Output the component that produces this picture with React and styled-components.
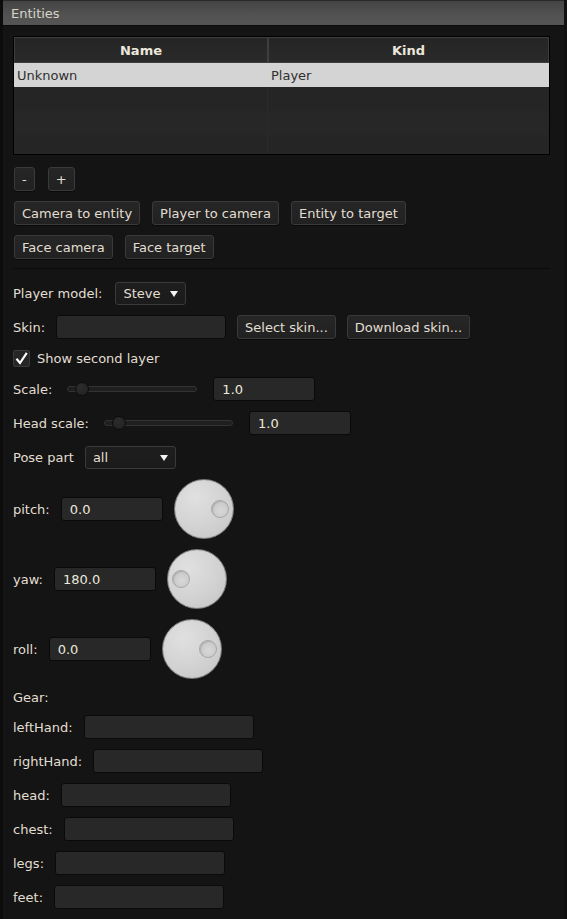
import React from "react";
import styled, { createGlobalStyle } from "styled-components";

const Global = createGlobalStyle`
  html, body { margin: 0; padding: 0; background: #141414; }
  body { font-family: "DejaVu Sans", "Liberation Sans", sans-serif; font-size: 13px; color: #e2ded2; }
  * { box-sizing: border-box; }
`;

const Window = styled.div`
  min-height: 100vh;
  background: #141414;
  border-left: 3px solid #0c0c0c;
  border-right: 3px solid #101010;
`;

const TitleBar = styled.div`
  height: 26px;
  display: flex;
  align-items: center;
  padding-left: 8px;
  background: linear-gradient(#444444, #525252 60%, #555555);
  border-top: 1px solid #2a2a2a;
  border-bottom: 1px solid #0a0a0a;
  color: #d8d4c8;
  font-size: 13px;
`;

const Content = styled.div`
  padding: 10px 14px 0 10px;
  display: flex;
  flex-direction: column;
`;

const Table = styled.div`
  height: 119px;
  border: 1px solid #000;
  background: #262626;
  overflow: hidden;
  display: flex;
  flex-direction: column;
`;

const Row = styled.div`
  display: grid;
  grid-template-columns: 254px 1fr;
  height: ${(p) => (p.$header ? 26 : 24)}px;
  flex: none;
  background: ${(p) => (p.$selected ? "#d4d4d4" : p.$alt ? "#252525" : "#272727")};
  color: ${(p) => (p.$selected ? "#303030" : "#e2ded2")};
`;

const HeaderCell = styled.div`
  display: flex;
  align-items: center;
  justify-content: center;
  font-weight: bold;
  color: #ebe7da;
  background: linear-gradient(#252525, #2a2a2a);
  border: 1px solid #3e3e3e;
`;

const Cell = styled.div`
  display: flex;
  align-items: center;
  padding-left: 3px;
  border-right: ${(p) => (p.$first && !p.$selected ? "1px solid #2b2b2b" : "none")};
  padding-right: ${(p) => (p.$first && p.$selected ? 1 : 0)}px;
`;

const ButtonRow = styled.div`
  display: flex;
  gap: ${(p) => p.$gap || 12}px;
  margin-top: ${(p) => p.$mt || 10}px;
  padding-left: 1px;
`;

const Button = styled.button`
  height: 24px;
  padding: 0 ${(p) => p.$px || 7}px;
  font-family: inherit;
  font-size: 13px;
  color: #e2ded2;
  background: linear-gradient(#262626, #212121);
  border: 1px solid #3a3a3a;
  border-radius: 3px;
  box-shadow: 0 1px 0 #0a0a0a;
  cursor: default;
  min-width: ${(p) => p.$min || 0}px;
`;

const Separator = styled.div`
  height: 1px;
  background: #3a3a3a;
  border-bottom: 1px solid #0a0a0a;
  margin: 9px 0 13px 0;
`;

const FormRow = styled.div`
  display: flex;
  align-items: center;
  gap: ${(p) => p.$gap || 11}px;
  height: ${(p) => p.$h || 24}px;
  margin-bottom: 10px;
`;

const Label = styled.span`
  color: #e2ded2;
  white-space: nowrap;
`;

const Field = styled.div`
  width: ${(p) => p.$w || 170}px;
  height: 24px;
  background: #282828;
  border: 1px solid #0a0a0a;
  border-radius: 3px;
  display: flex;
  align-items: center;
  padding-left: 8px;
  color: #ece8dc;
`;

const Combo = styled.div`
  width: ${(p) => p.$w}px;
  height: 23px;
  background: linear-gradient(#1e1e1e, #1b1b1b);
  border: 1px solid #3a3a3a;
  border-radius: 3px;
  display: flex;
  align-items: center;
  justify-content: space-between;
  padding: 0 7px 0 7px;
  color: #e2ded2;
`;

const Arrow = styled.span`
  width: 0;
  height: 0;
  border-left: 4.5px solid transparent;
  border-right: 4.5px solid transparent;
  border-top: 6px solid #f2f2f2;
  margin-top: 1px;
`;

const CheckRow = styled.div`
  display: flex;
  align-items: center;
  gap: 7px;
  height: 18px;
  margin-bottom: 10px;
`;

const CheckBox = styled.div`
  width: 17px;
  height: 17px;
  background: #262626;
  border: 1px solid #3a3a3a;
  border-radius: 2px;
  display: flex;
  align-items: center;
  justify-content: center;
`;

const Slider = styled.div`
  width: ${(p) => p.$w}px;
  height: 18px;
  position: relative;
  display: flex;
  align-items: center;
  margin: 0 6px 0 5px;
`;

const Track = styled.div`
  width: 100%;
  height: 6px;
  border-radius: 3px;
  background: #1f1f1f;
  border: 1px solid #333;
`;

const Thumb = styled.div`
  position: absolute;
  top: 2px;
  left: ${(p) => p.$left}px;
  width: 14px;
  height: 14px;
  border-radius: 50%;
  background: radial-gradient(circle at 40% 35%, #2c2c2c, #202020);
  border: 1px solid #0c0c0c;
`;

const KnobRow = styled.div`
  display: flex;
  align-items: center;
  gap: 11px;
  height: 60px;
  margin-bottom: 10px;
`;

const Knob = styled.div`
  width: 60px;
  height: 60px;
  border-radius: 50%;
  position: relative;
  background: radial-gradient(circle at 35% 30%, #e0e0e0, #d2d2d2 55%, #c4c4c4);
  border: 1px solid #7a7a7a;
  box-shadow: inset 0 0 1px #aaa;
`;

const KnobDot = styled.div`
  position: absolute;
  top: 20px;
  left: ${(p) => (p.$side === "left" ? 4 : 36)}px;
  width: 18px;
  height: 18px;
  border-radius: 50%;
  background: radial-gradient(circle at 55% 60%, #d8d8d8, #c2c2c2);
  border: 1px solid #a8a8a8;
  box-shadow: inset 1px 1px 1px #b0b0b0;
`;

const GearLabel = styled.div`
  height: 16px;
  display: flex;
  align-items: center;
  margin-bottom: 10px;
`;

const rows = [
  { name: "Unknown", kind: "Player", selected: true },
  { name: "", kind: "" },
  { name: "", kind: "" },
  { name: "", kind: "" },
];

const knobs = [
  { label: "pitch:", value: "0.0", side: "right" },
  { label: "yaw:", value: "180.0", side: "left" },
  { label: "roll:", value: "0.0", side: "right" },
];

const gear = ["leftHand:", "rightHand:", "head:", "chest:", "legs:", "feet:"];

export default function App() {
  return (
    <>
      <Global />
      <Window>
        <TitleBar>Entities</TitleBar>
        <Content>
          <Table>
            <Row $header>
              <HeaderCell>Name</HeaderCell>
              <HeaderCell>Kind</HeaderCell>
            </Row>
            {rows.map((r, i) => (
              <Row key={i} $selected={r.selected} $alt={i % 2 === 1}>
                <Cell $first $selected={r.selected}>{r.name}</Cell>
                <Cell>{r.kind}</Cell>
              </Row>
            ))}
          </Table>

          <ButtonRow $mt={12} $gap={13}>
            <Button $px={7} $min={20}>-</Button>
            <Button $px={7} $min={26}>+</Button>
          </ButtonRow>
          <ButtonRow>
            <Button>Camera to entity</Button>
            <Button>Player to camera</Button>
            <Button>Entity to target</Button>
          </ButtonRow>
          <ButtonRow>
            <Button>Face camera</Button>
            <Button>Face target</Button>
          </ButtonRow>

          <Separator />

          <FormRow $gap={13} $h={23}>
            <Label>Player model:</Label>
            <Combo $w={71}>
              <span>Steve</span>
              <Arrow />
            </Combo>
          </FormRow>

          <FormRow>
            <Label>Skin:</Label>
            <Field $w={170} />
            <Button>Select skin...</Button>
            <Button>Download skin...</Button>
          </FormRow>

          <CheckRow>
            <CheckBox>
              <svg width="15" height="15" viewBox="0 0 15 15">
                <path d="M2.5 7.8 L6 12 L12.8 1.8" fill="none" stroke="#ffffff" strokeWidth="2.2" strokeLinejoin="miter" />
              </svg>
            </CheckBox>
            <Label>Show second layer</Label>
          </CheckRow>

          <FormRow $gap={10}>
            <Label>Scale:</Label>
            <Slider $w={130}>
              <Track />
              <Thumb $left={8} />
            </Slider>
            <Field $w={102}>1.0</Field>
          </FormRow>

          <FormRow $gap={10}>
            <Label>Head scale:</Label>
            <Slider $w={129}>
              <Track />
              <Thumb $left={8} />
            </Slider>
            <Field $w={102}>1.0</Field>
          </FormRow>

          <FormRow $gap={11}>
            <Label>Pose part</Label>
            <Combo $w={91}>
              <span>all</span>
              <Arrow />
            </Combo>
          </FormRow>

          {knobs.map((k) => (
            <KnobRow key={k.label}>
              <Label>{k.label}</Label>
              <Field $w={102}>{k.value}</Field>
              <Knob>
                <KnobDot $side={k.side} />
              </Knob>
            </KnobRow>
          ))}

          <GearLabel>Gear:</GearLabel>

          {gear.map((g) => (
            <FormRow key={g}>
              <Label>{g}</Label>
              <Field $w={170} />
            </FormRow>
          ))}
        </Content>
      </Window>
    </>
  );
}
